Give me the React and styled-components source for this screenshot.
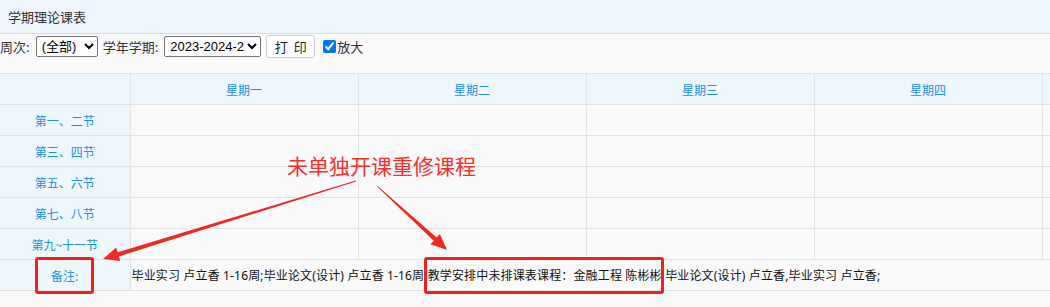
import React from "react";
import styled, { createGlobalStyle } from "styled-components";

const GlobalStyle = createGlobalStyle`
  html, body {
    margin: 0;
    padding: 0;
    background: #fafafa;
    overflow: hidden;
    font-family: "Noto Sans CJK SC", "Noto Sans", sans-serif;
  }
`;

const Page = styled.div`
  position: relative;
  width: 1050px;
  height: 307px;
  overflow: hidden;
`;

const TitleBar = styled.div`
  height: 33px;
  line-height: 33px;
  padding-left: 8px;
  background: #eef5fd;
  border-bottom: 1px solid #d9dde2;
  font-size: 13px;
  color: #333;
`;

const Toolbar = styled.div`
  display: flex;
  align-items: center;
  height: 24px;
  font-size: 13px;
  color: #333;
  margin-bottom: 15px;
`;

const Label = styled.span`
  margin-right: 3px;
  margin-left: ${(p) => p.$ml || 0}px;
`;

const Select = styled.select`
  height: 21px;
  font-size: 13px;
  font-family: "Liberation Sans", "Noto Sans CJK SC", sans-serif;
  border: 1px solid #767676;
  border-radius: 2px;
  background: #fff;
  color: #000;
  padding: 0 0 0 1px;
  margin-left: ${(p) => p.$ml || 0}px;
  width: ${(p) => p.$w}px;
`;

const PrintButton = styled.button`
  margin-left: 5px;
  height: 23px;
  width: 49px;
  border: 1px solid #cfcfcf;
  border-radius: 3px;
  background: #fff;
  font-size: 13px;
  font-family: "Noto Sans CJK SC", sans-serif;
  color: #222;
  padding: 0;
  word-spacing: 3px;
`;

const Check = styled.label`
  display: flex;
  align-items: center;
  margin-left: 8px;
  input {
    margin: 0 1px 0 0;
    width: 13px;
    height: 13px;
  }
`;

const Table = styled.table`
  border-collapse: collapse;
  table-layout: fixed;
  width: 1270px;
  font-size: 12px;
  border-top: 1px solid #e3e3e3;
`;

const HeadCell = styled.th`
  height: 30px;
  padding: 0;
  font-weight: normal;
  color: #1e90e6;
  background: #eef6fe;
  border: 1px solid #e3e3e3;
  border-left: ${(p) => (p.$first ? "none" : "1px solid #e3e3e3")};
`;

const RowLabel = styled.td`
  height: 30px;
  padding: 0;
  text-align: center;
  color: #1e90e6;
  background: #eef6fe;
  border: 1px solid #e3e3e3;
  border-left: none;
`;

const Cell = styled.td`
  padding: 0;
  background: #fafafa;
  border: 1px solid #e3e3e3;
`;

const NoteCell = styled.td`
  padding: 0 0 0 1px;
  background: #fafafa;
  color: #111;
  font-family: "Noto Sans", "Noto Sans CJK SC", sans-serif;
  letter-spacing: 0.15px;
  border: 1px solid #e3e3e3;
  border-right: none;
  white-space: nowrap;
`;

const Boxed = styled.span`
  position: relative;
  &::after {
    content: "";
    position: absolute;
    left: ${(p) => p.$l}px;
    right: ${(p) => p.$r}px;
    top: -10px;
    bottom: -10px;
    border: 3px solid #f0201c;
    border-radius: 3px;
  }
`;

const Callout = styled.div`
  position: absolute;
  left: 287px;
  top: 150px;
  font-size: 21px;
  color: #f5312b;
  white-space: nowrap;
`;

const Overlay = styled.svg`
  position: absolute;
  left: 0;
  top: 0;
  pointer-events: none;
`;

const days = ["星期一", "星期二", "星期三", "星期四", ""];
const periods = ["第一、二节", "第三、四节", "第五、六节", "第七、八节", "第九~十一节"];

function Arrow({ x1, y1, x2, y2 }) {
  const dx = x2 - x1;
  const dy = y2 - y1;
  const len = Math.hypot(dx, dy);
  const ux = dx / len;
  const uy = dy / len;
  const px = -uy;
  const py = ux;
  const head = 16;
  const bx = x2 - ux * head;
  const by = y2 - uy * head;
  const pts = [
    [x1 + px * 0.4, y1 + py * 0.4],
    [bx + px * 2.2, by + py * 2.2],
    [bx + px * 7, by + py * 7],
    [x2, y2],
    [bx - px * 7, by - py * 7],
    [bx - px * 2.2, by - py * 2.2],
    [x1 - px * 0.4, y1 - py * 0.4],
  ];
  return <polygon points={pts.map((p) => p.join(",")).join(" ")} fill="#ee2a24" />;
}

export default function App() {
  return (
    <Page>
      <GlobalStyle />
      <TitleBar>学期理论课表</TitleBar>
      <Toolbar>
        <Label>周次:</Label>
        <Select $w={62} $ml={3}>
          <option>(全部)</option>
        </Select>
        <Label $ml={5}>学年学期:</Label>
        <Select $w={97} $ml={3}>
          <option>2023-2024-2</option>
        </Select>
        <PrintButton>打 印</PrintButton>
        <Check>
          <input type="checkbox" defaultChecked />
          放大
        </Check>
      </Toolbar>
      <Table>
        <colgroup>
          <col style={{ width: 130 }} />
          {days.map((d, i) => (
            <col key={i} style={{ width: 228 }} />
          ))}
        </colgroup>
        <thead>
          <tr>
            <HeadCell $first />
            {days.map((d, i) => (
              <HeadCell key={i}>{d}</HeadCell>
            ))}
          </tr>
        </thead>
        <tbody>
          {periods.map((p) => (
            <tr key={p}>
              <RowLabel>{p}</RowLabel>
              {days.map((d, i) => (
                <Cell key={i} />
              ))}
            </tr>
          ))}
          <tr>
            <RowLabel>
              <Boxed $l={-16} $r={-16}>备注:</Boxed>
            </RowLabel>
            <NoteCell colSpan={5}>
              毕业实习 卢立香 1-16周;毕业论文(设计) 卢立香 1-16周;
              <Boxed $l={-4} $r={-2}>教学安排中未排课表课程：金融工程 陈彬彬</Boxed>
              ;毕业论文(设计) 卢立香,毕业实习 卢立香;
            </NoteCell>
          </tr>
        </tbody>
      </Table>
      <Callout>未单独开课重修课程</Callout>
      <Overlay width="1050" height="307">
        <Arrow x1={356} y1={181} x2={103} y2={259} />
        <Arrow x1={377} y1={186} x2={447} y2={250} />
      </Overlay>
    </Page>
  );
}
